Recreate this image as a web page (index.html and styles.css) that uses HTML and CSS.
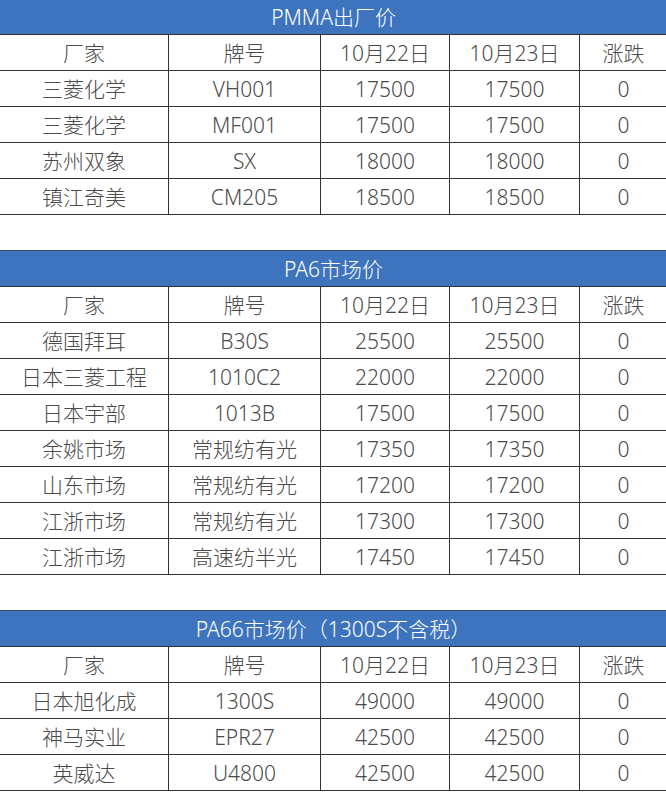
FILE: index.html
```html
<!DOCTYPE html>
<html lang="zh">
<head>
<meta charset="utf-8">
<title>价格表</title>
<link rel="stylesheet" href="styles.css">
</head>
<body>
<div class="page">
  <table class="price first">
    <colgroup><col class="c1"><col class="c2"><col class="c3"><col class="c4"><col class="c5"></colgroup>
    <tr class="title"><td colspan="5">PMMA出厂价</td></tr>
    <tr><td>厂家</td><td>牌号</td><td>10月22日</td><td>10月23日</td><td>涨跌</td></tr>
    <tr><td>三菱化学</td><td>VH001</td><td>17500</td><td>17500</td><td>0</td></tr>
    <tr><td>三菱化学</td><td>MF001</td><td>17500</td><td>17500</td><td>0</td></tr>
    <tr><td>苏州双象</td><td>SX</td><td>18000</td><td>18000</td><td>0</td></tr>
    <tr><td>镇江奇美</td><td>CM205</td><td>18500</td><td>18500</td><td>0</td></tr>
  </table>

  <table class="price">
    <colgroup><col class="c1"><col class="c2"><col class="c3"><col class="c4"><col class="c5"></colgroup>
    <tr class="title"><td colspan="5">PA6市场价</td></tr>
    <tr><td>厂家</td><td>牌号</td><td>10月22日</td><td>10月23日</td><td>涨跌</td></tr>
    <tr><td>德国拜耳</td><td>B30S</td><td>25500</td><td>25500</td><td>0</td></tr>
    <tr><td>日本三菱工程</td><td>1010C2</td><td>22000</td><td>22000</td><td>0</td></tr>
    <tr><td>日本宇部</td><td>1013B</td><td>17500</td><td>17500</td><td>0</td></tr>
    <tr><td>余姚市场</td><td>常规纺有光</td><td>17350</td><td>17350</td><td>0</td></tr>
    <tr><td>山东市场</td><td>常规纺有光</td><td>17200</td><td>17200</td><td>0</td></tr>
    <tr><td>江浙市场</td><td>常规纺有光</td><td>17300</td><td>17300</td><td>0</td></tr>
    <tr><td>江浙市场</td><td>高速纺半光</td><td>17450</td><td>17450</td><td>0</td></tr>
  </table>

  <table class="price">
    <colgroup><col class="c1"><col class="c2"><col class="c3"><col class="c4"><col class="c5"></colgroup>
    <tr class="title"><td colspan="5">PA66市场价（1300S不含税）</td></tr>
    <tr><td>厂家</td><td>牌号</td><td>10月22日</td><td>10月23日</td><td>涨跌</td></tr>
    <tr><td>日本旭化成</td><td>1300S</td><td>49000</td><td>49000</td><td>0</td></tr>
    <tr><td>神马实业</td><td>EPR27</td><td>42500</td><td>42500</td><td>0</td></tr>
    <tr><td>英威达</td><td>U4800</td><td>42500</td><td>42500</td><td>0</td></tr>
  </table>
</div>
</body>
</html>
```

FILE: styles.css
```css
html, body {
  margin: 0;
  padding: 0;
  background: #ffffff;
}
.page {
  width: 666px;
  overflow: hidden;
  display: flex;
  flex-direction: column;
  gap: 35px;
}
.price {
  border-collapse: collapse;
  table-layout: fixed;
  width: 668px;
  margin-left: -1px;
  font-family: "Noto Sans", "Noto Sans CJK SC", sans-serif;
  font-size: 21px;
  font-weight: 300;
  color: #4a4a4a;
}
.c1 { width: 169px; }
.c2 { width: 152px; }
.c3 { width: 129px; }
.c4 { width: 130px; }
.c5 { width: 88px; }
.price td {
  border: 1px solid #333333;
  height: 35px;
  padding: 0;
  text-align: center;
  vertical-align: middle;
  line-height: 24px;
  white-space: nowrap;
}
.price .title td {
  background: #3e74bd;
  color: #ffffff;
  border-top-color: #2b4d7c;
}
.first .title td {
  height: 34px;
  border-top: none;
}
```
